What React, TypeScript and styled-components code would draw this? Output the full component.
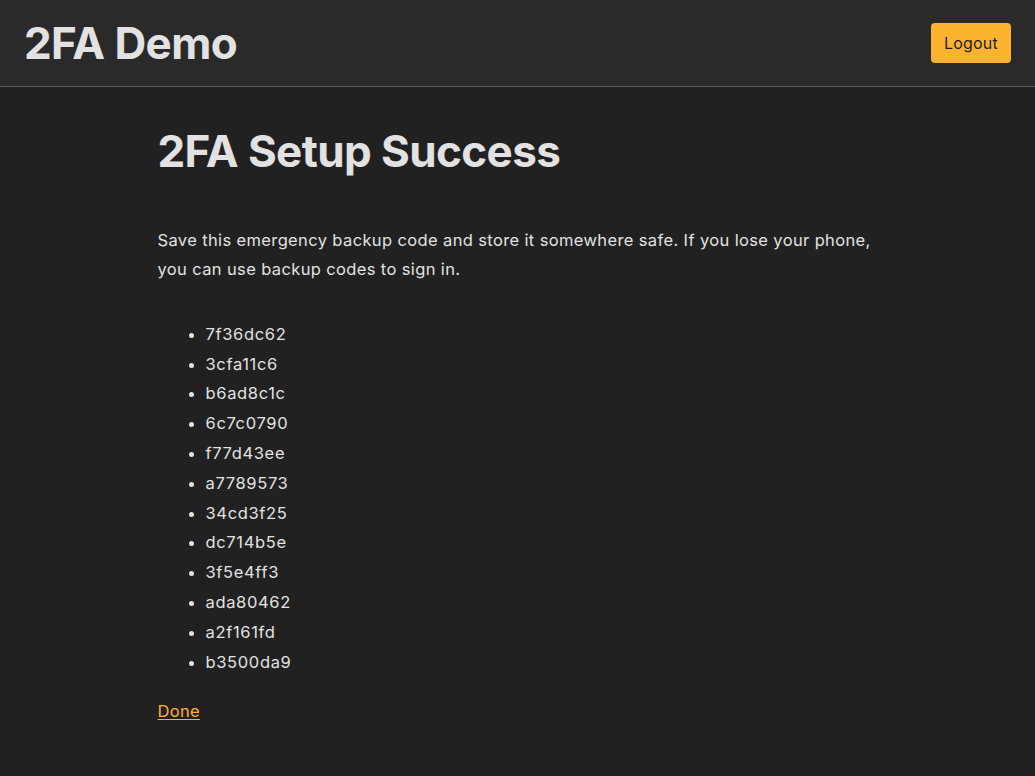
import React from "react";
import styled, { createGlobalStyle } from "styled-components";

const GlobalStyle = createGlobalStyle`
  html, body {
    margin: 0;
    padding: 0;
    background: #212121;
  }
  body {
    font-family: Inter, "Noto Sans", "Liberation Sans", sans-serif;
    color: #e2e2e2;
    -webkit-font-smoothing: antialiased;
  }
`;

const Page = styled.div`
  min-height: 776px;
  background: #212121;
`;

const Header = styled.header`
  height: 87px;
  box-sizing: border-box;
  display: flex;
  align-items: center;
  justify-content: space-between;
  padding: 0 24px;
  background: #2a2a2a;
  border-bottom: 1px solid #5c5c5c;
`;

const Brand = styled.div`
  font-size: 44px;
  line-height: 1.2;
  font-weight: 700;
  letter-spacing: -0.6px;
  color: #e2e2e2;
`;

const LogoutButton = styled.button`
  width: 80px;
  height: 40px;
  border: none;
  border-radius: 4px;
  background: #fdb32f;
  color: #1e1e1e;
  font-family: inherit;
  font-size: 16px;
  letter-spacing: 0.2px;
  padding: 0;
  cursor: pointer;
`;

const Main = styled.main`
  max-width: 720px;
  margin: 0 auto;
  padding-top: 38px;
`;

const Title = styled.h1`
  margin: 0;
  font-size: 44px;
  line-height: 1.2;
  font-weight: 700;
  letter-spacing: -0.6px;
  color: #e2e2e2;
`;

const Text = styled.p`
  margin: 48px 0 0;
  font-size: 16.5px;
  line-height: 29px;
  letter-spacing: 0.37px;
  color: #e2e2e2;
`;

const CodeList = styled.ul`
  margin: 36px 0 0;
  padding-left: 48px;
`;

const Code = styled.li`
  font-size: 16.5px;
  line-height: 29.8px;
  letter-spacing: 0.65px;
  color: #e2e2e2;
`;

const DoneLink = styled.a`
  display: inline-block;
  margin-top: 20px;
  font-size: 16.5px;
  line-height: 29px;
  letter-spacing: 0.3px;
  color: #fdb32f;
  text-decoration: underline;
  text-underline-offset: 2px;
`;

const codes = [
  "7f36dc62",
  "3cfa11c6",
  "b6ad8c1c",
  "6c7c0790",
  "f77d43ee",
  "a7789573",
  "34cd3f25",
  "dc714b5e",
  "3f5e4ff3",
  "ada80462",
  "a2f161fd",
  "b3500da9",
];

export default function App() {
  return (
    <Page>
      <GlobalStyle />
      <Header>
        <Brand>2FA Demo</Brand>
        <LogoutButton>Logout</LogoutButton>
      </Header>
      <Main>
        <Title>2FA Setup Success</Title>
        <Text>
          Save this emergency backup code and store it somewhere safe. If you lose your phone,
          you can use backup codes to sign in.
        </Text>
        <CodeList>
          {codes.map((c) => (
            <Code key={c}>{c}</Code>
          ))}
        </CodeList>
        <DoneLink href="#">Done</DoneLink>
      </Main>
    </Page>
  );
}
